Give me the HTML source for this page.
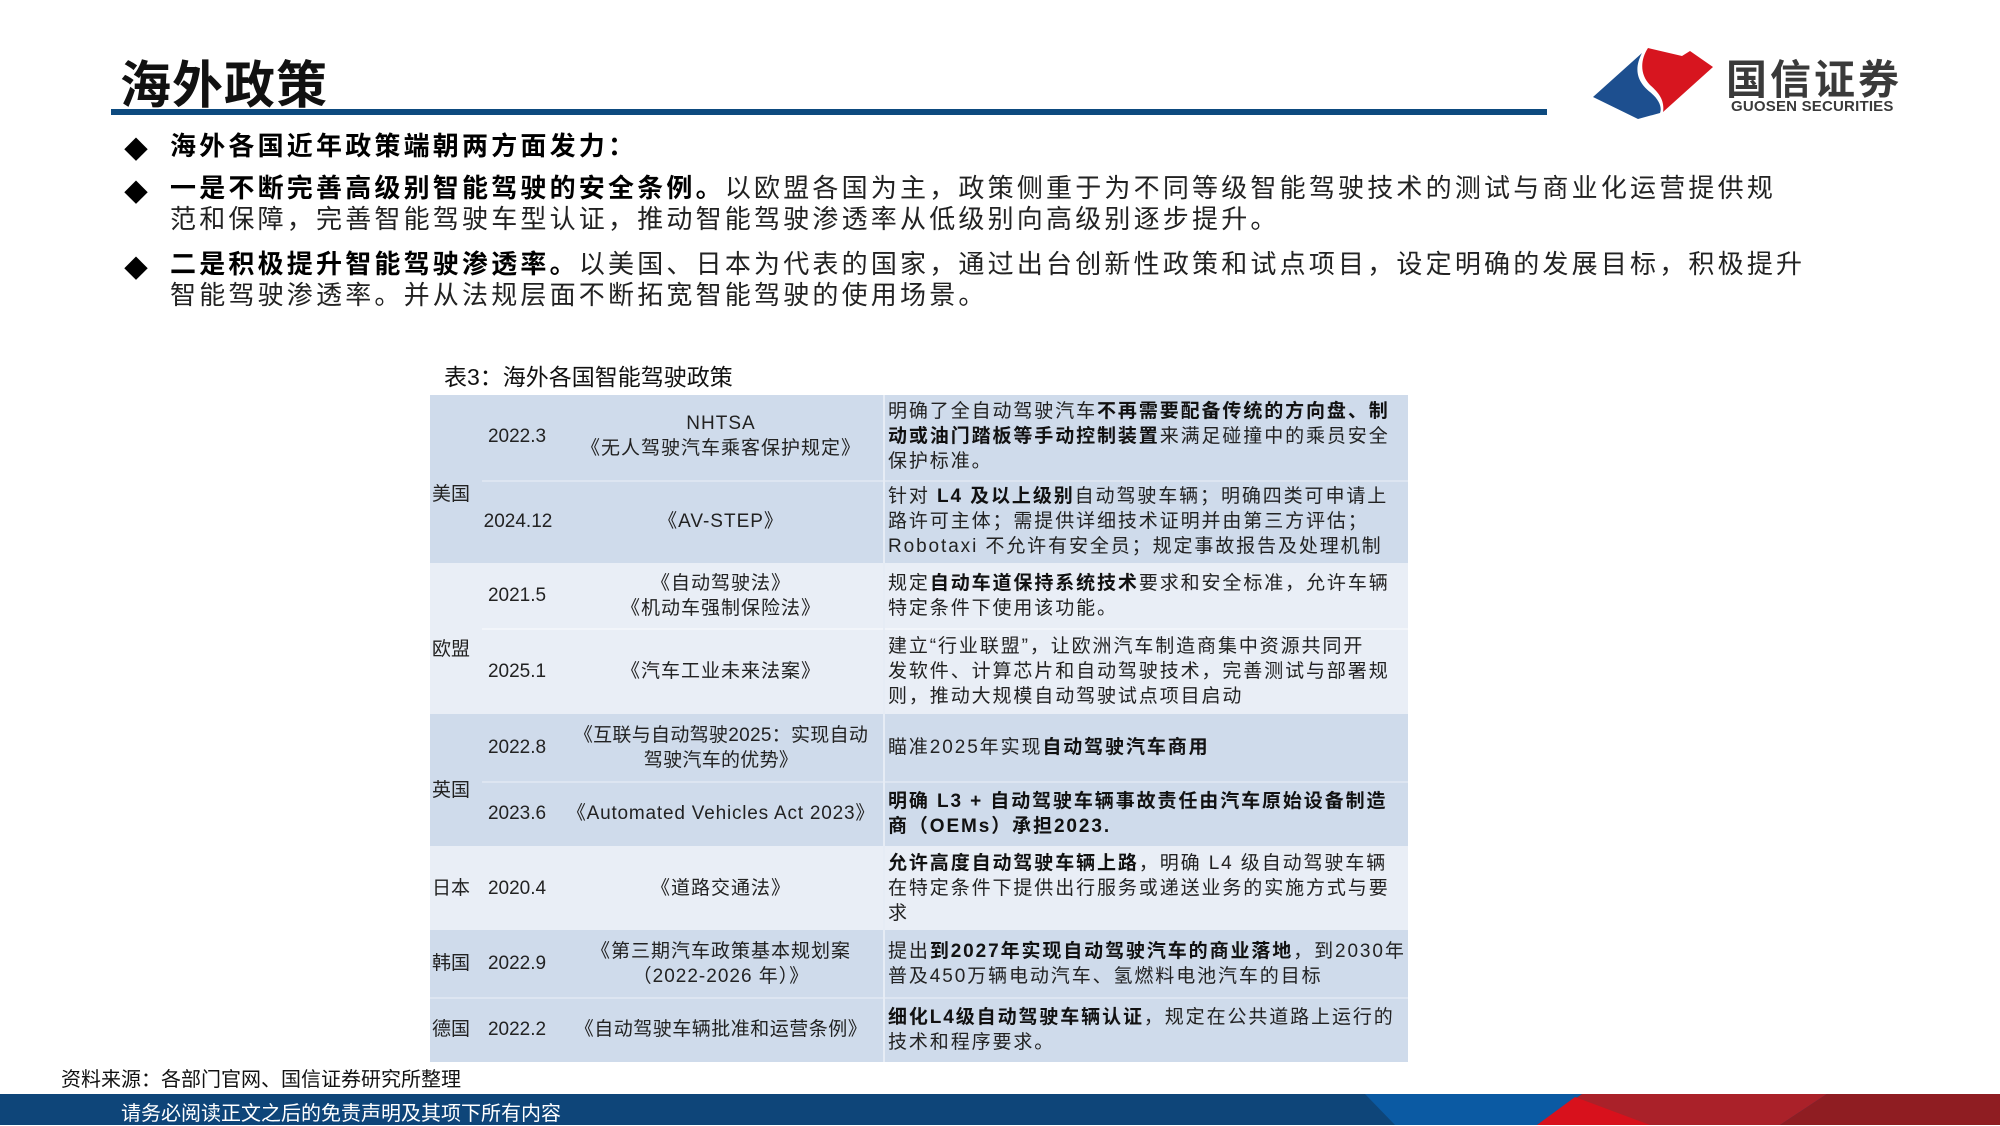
<!DOCTYPE html>
<html><head><meta charset="utf-8"><style>
*{margin:0;padding:0;box-sizing:border-box}
body{width:2000px;height:1125px;position:relative;background:#fff;font-family:"Liberation Sans","Noto Sans CJK SC",sans-serif;overflow:hidden;color:#222}
.a{position:absolute}
.title{left:120px;top:44px;font-size:51px;font-weight:bold;color:#111;letter-spacing:1px}
.line{left:111px;top:109px;width:1436px;height:6px;background:#0d4a7f}
.bl{left:170px;font-size:26px;line-height:31px;color:#222;white-space:nowrap;letter-spacing:3.2px}
.bl b{color:#000}
.dm{left:124px;font-size:24px;color:#000}
.cap{left:444px;top:358px;font-size:23px;color:#111}
.cell{position:absolute;font-size:19px;line-height:25px;display:flex;align-items:center}
.c{justify-content:center;text-align:center;letter-spacing:1px}
.d{color:#222;letter-spacing:1.9px;white-space:nowrap}
.d b{color:#111}
</style></head><body>
<div class="a title">海外政策</div>
<div class="a line"></div>

<svg class="a" style="left:1585px;top:42px" width="135" height="82" viewBox="1585 42 135 82">
<path d="M1593 97 L1642 53 C1632 72 1640 84 1650 92 C1660 100 1662 108 1660 113 L1638 119 Z" fill="#1d4f8f"/>
<path d="M1648 48 L1682 56 L1690 51 L1713 67 L1663 112 C1665 100 1658 92 1650 85 C1640 75 1640 60 1648 48 Z" fill="#d7151f"/>
</svg>
<div class="a" style="left:1726px;top:46px;font-size:41px;color:#3a3a3a;letter-spacing:3px;font-weight:bold">国信证券</div>
<div class="a" style="left:1731px;top:98px;font-size:15px;color:#3a3a3a;font-weight:bold;letter-spacing:0.2px">GUOSEN SECURITIES</div>

<div class="a dm" style="top:130px">◆</div>
<div class="a bl" style="top:131px"><b>海外各国近年政策端朝两方面发力：</b></div>
<div class="a dm" style="top:173px">◆</div>
<div class="a bl" style="top:173px"><b>一是不断完善高级别智能驾驶的安全条例。</b>以欧盟各国为主，政策侧重于为不同等级智能驾驶技术的测试与商业化运营提供规<br>范和保障，完善智能驾驶车型认证，推动智能驾驶渗透率从低级别向高级别逐步提升。</div>
<div class="a dm" style="top:249px">◆</div>
<div class="a bl" style="top:249px"><b>二是积极提升智能驾驶渗透率。</b>以美国、日本为代表的国家，通过出台创新性政策和试点项目，设定明确的发展目标，积极提升<br>智能驾驶渗透率。并从法规层面不断拓宽智能驾驶的使用场景。</div>

<div class="a cap">表3：海外各国智能驾驶政策</div>

<div class="a" style="left:430px;top:395px;width:978px;height:168px;background:#cfdbeb"></div>
<div class="a" style="left:430px;top:563px;width:978px;height:151px;background:#e9eef6"></div>
<div class="a" style="left:430px;top:714px;width:978px;height:132px;background:#cfdbeb"></div>
<div class="a" style="left:430px;top:846px;width:978px;height:84px;background:#e9eef6"></div>
<div class="a" style="left:430px;top:930px;width:978px;height:132px;background:#cfdbeb"></div>
<div class="a" style="left:482px;top:480px;width:926px;height:2px;background:#dde5f1"></div>
<div class="a" style="left:482px;top:628px;width:926px;height:2px;background:#f2f5fa"></div>
<div class="a" style="left:482px;top:781px;width:926px;height:2px;background:#dde5f1"></div>
<div class="a" style="left:430px;top:997px;width:978px;height:2px;background:#dde5f1"></div>
<div class="a" style="left:883px;top:395px;width:2px;height:667px;background:#e6ecf5"></div>

<div class="cell" style="left:432px;top:395px;height:168px;padding-top:30px"><span>美国</span></div>
<div class="cell" style="left:432px;top:563px;height:151px;padding-top:22px"><span>欧盟</span></div>
<div class="cell" style="left:432px;top:714px;height:132px;padding-top:20px"><span>英国</span></div>
<div class="cell" style="left:432px;top:846px;height:84px"><span>日本</span></div>
<div class="cell" style="left:432px;top:930px;height:67px"><span>韩国</span></div>
<div class="cell" style="left:432px;top:997px;height:65px"><span>德国</span></div>

<div class="cell c" style="left:482px;top:395px;width:70px;height:82px;letter-spacing:0">2022.3</div>
<div class="cell c" style="left:476px;top:480px;width:84px;height:83px;letter-spacing:0">2024.12</div>
<div class="cell c" style="left:482px;top:563px;width:70px;height:65px;letter-spacing:0">2021.5</div>
<div class="cell c" style="left:482px;top:628px;width:70px;height:86px;letter-spacing:0">2025.1</div>
<div class="cell c" style="left:482px;top:714px;width:70px;height:67px;letter-spacing:0">2022.8</div>
<div class="cell c" style="left:482px;top:781px;width:70px;height:65px;letter-spacing:0">2023.6</div>
<div class="cell c" style="left:482px;top:846px;width:70px;height:84px;letter-spacing:0">2020.4</div>
<div class="cell c" style="left:482px;top:930px;width:70px;height:67px;letter-spacing:0">2022.9</div>
<div class="cell c" style="left:482px;top:997px;width:70px;height:65px;letter-spacing:0">2022.2</div>

<div class="cell c" style="left:559px;top:395px;width:324px;height:82px"><span>NHTSA<br>《无人驾驶汽车乘客保护规定》</span></div>
<div class="cell c" style="left:559px;top:480px;width:324px;height:83px"><span>《AV-STEP》</span></div>
<div class="cell c" style="left:559px;top:563px;width:324px;height:65px"><span>《自动驾驶法》<br>《机动车强制保险法》</span></div>
<div class="cell c" style="left:559px;top:628px;width:324px;height:86px"><span>《汽车工业未来法案》</span></div>
<div class="cell c" style="left:559px;top:714px;width:324px;height:67px;letter-spacing:0.3px"><span>《互联与自动驾驶2025：实现自动<br>驾驶汽车的优势》</span></div>
<div class="cell c" style="left:559px;top:781px;width:324px;height:65px;white-space:nowrap;letter-spacing:0.8px"><span>《Automated Vehicles Act 2023》</span></div>
<div class="cell c" style="left:559px;top:846px;width:324px;height:84px"><span>《道路交通法》</span></div>
<div class="cell c" style="left:559px;top:930px;width:324px;height:67px"><span>《第三期汽车政策基本规划案<br>（2022-2026 年）》</span></div>
<div class="cell c" style="left:559px;top:997px;width:324px;height:65px;letter-spacing:0.5px"><span>《自动驾驶车辆批准和运营条例》</span></div>

<div class="cell d" style="left:888px;top:395px;width:520px;height:82px"><span>明确了全自动驾驶汽车<b>不再需要配备传统的方向盘、制<br>动或油门踏板等手动控制装置</b>来满足碰撞中的乘员安全<br>保护标准。</span></div>
<div class="cell d" style="left:888px;top:480px;width:520px;height:83px"><span>针对 <b>L4 及以上级别</b>自动驾驶车辆；明确四类可申请上<br>路许可主体；需提供详细技术证明并由第三方评估；<br>Robotaxi 不允许有安全员；规定事故报告及处理机制</span></div>
<div class="cell d" style="left:888px;top:563px;width:520px;height:65px"><span>规定<b>自动车道保持系统技术</b>要求和安全标准，允许车辆<br>特定条件下使用该功能。</span></div>
<div class="cell d" style="left:888px;top:628px;width:520px;height:86px"><span>建立“行业联盟”，让欧洲汽车制造商集中资源共同开<br>发软件、计算芯片和自动驾驶技术，完善测试与部署规<br>则，推动大规模自动驾驶试点项目启动</span></div>
<div class="cell d" style="left:888px;top:714px;width:520px;height:67px"><span>瞄准2025年实现<b>自动驾驶汽车商用</b></span></div>
<div class="cell d" style="left:888px;top:781px;width:520px;height:65px"><span><b>明确 L3 + 自动驾驶车辆事故责任由汽车原始设备制造<br>商（OEMs）承担2023.</b></span></div>
<div class="cell d" style="left:888px;top:846px;width:520px;height:84px"><span><b>允许高度自动驾驶车辆上路</b>，明确 L4 级自动驾驶车辆<br>在特定条件下提供出行服务或递送业务的实施方式与要<br>求</span></div>
<div class="cell d" style="left:888px;top:930px;width:520px;height:67px"><span>提出<b>到2027年实现自动驾驶汽车的商业落地</b>，到2030年<br>普及450万辆电动汽车、氢燃料电池汽车的目标</span></div>
<div class="cell d" style="left:888px;top:997px;width:520px;height:65px"><span><b>细化L4级自动驾驶车辆认证</b>，规定在公共道路上运行的<br>技术和程序要求。</span></div>

<div class="a" style="left:61px;top:1063px;font-size:20px;color:#111">资料来源：各部门官网、国信证券研究所整理</div>

<svg class="a" style="left:0;top:1094px" width="2000" height="31" viewBox="0 0 2000 31">
<rect width="2000" height="31" fill="#0e4579"/>
<polygon points="1365,0 1582,0 1537,31 1395,31" fill="#0b5aa3"/>
<polygon points="1582,0 1827,0 1780,31 1537,31" fill="#aa2129"/>
<polygon points="1575,3 1650,31 1537,31" fill="#d8111c"/>
<polygon points="1827,0 2000,0 2000,31 1780,31" fill="#8f1d22"/>
</svg>
<div class="a" style="left:121px;top:1097px;font-size:20px;color:#fff">请务必阅读正文之后的免责声明及其项下所有内容</div>
</body></html>
